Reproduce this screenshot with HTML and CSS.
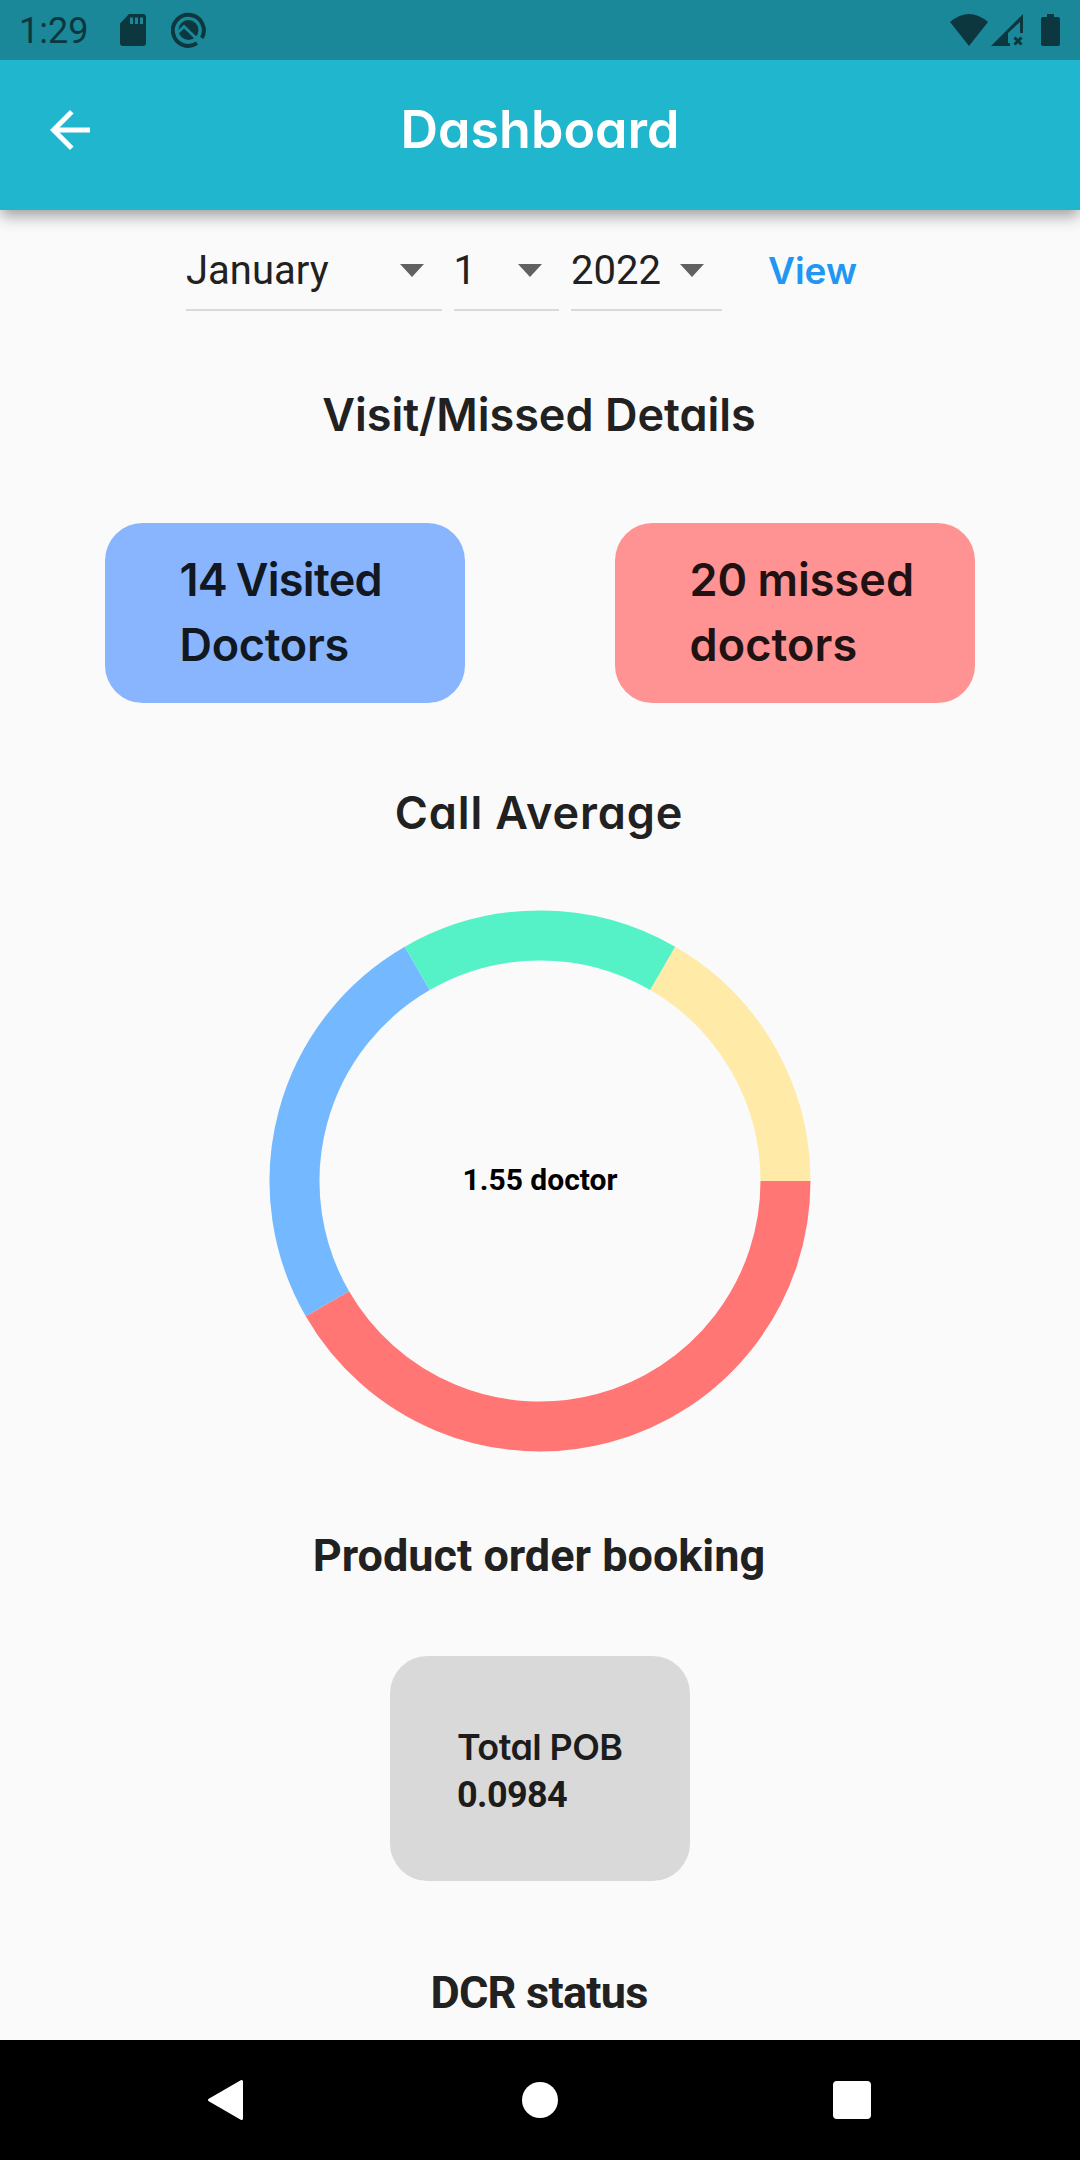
FILE: index.html
```
<!DOCTYPE html>
<html lang="en">
<head>
<meta charset="utf-8">
<title>Dashboard</title>
<link rel="stylesheet" href="styles.css">
</head>
<body>
<div class="status-bar">
  <span class="clock">1:29</span>
  <svg class="icon-sd" width="26" height="32" viewBox="0 0 26 32"><path fill-rule="evenodd" d="M9 0H23Q26 0 26 3V29Q26 32 23 32H3Q0 32 0 29V9.500ZM10 3.500V10H13V3.500ZM15 3.500V10H18V3.500ZM20 3.500V10H23V3.500Z"/></svg>
  <svg class="icon-q" width="36" height="36" viewBox="0 0 36 36"><path class="ring" d="M26 31.200A15.500 15.500 0 1 1 30.800 26"/><circle cx="17.500" cy="18" r="10"/><path class="cut" d="M7.500 20L13 14.500L29 30"/></svg>
  <div class="status-right">
    <svg class="icon-wifi" width="38" height="32" viewBox="0 0 38 32"><path d="M0 8Q19-8 38 8L19 32Z"/></svg>
    <svg class="icon-signal" width="32" height="32" viewBox="0 0 32 32"><path d="M32 0V19H29V8L17 19V29H19V32H0Z"/><path class="cross" d="M23.500 23.500L30.500 30.500M30.500 23.500L23.500 30.500"/></svg>
    <svg class="icon-battery" width="19" height="32" viewBox="0 0 19 32"><path d="M6 0H13V3H17Q19 3 19 5V30Q19 32 17 32H2Q0 32 0 30V5Q0 3 2 3H6Z"/></svg>
  </div>
</div>
<header class="app-bar">
  <svg class="back" width="60" height="60" viewBox="0 0 24 24"><path d="M20 11H7.830l5.590-5.590L12 4l-8 8 8 8 1.410-1.410L7.830 13H20v-2z"/></svg>
  <h1 class="title">Dashboard</h1>
</header>
<main class="content">
  <div class="filters">
    <div class="select month"><span>January</span><i class="caret"></i></div>
    <div class="select day"><span>1</span><i class="caret"></i></div>
    <div class="select year"><span>2022</span><i class="caret"></i></div>
    <a class="view">View</a>
  </div>
  <h2 class="heading visits">Visit/Missed Details</h2>
  <div class="cards">
    <div class="card visited"><span class="line-a">14 Visited</span><span class="line-d">Doctors</span></div>
    <div class="card missed"><span class="line-b">20 missed</span><span class="line-c">doctors</span></div>
  </div>
  <h2 class="heading average">Call Average</h2>
  <div class="donut">
    <svg width="542" height="542" viewBox="-271 -271 542 542">
      <path stroke="#ff7675" d="M245.500 0A245.500 245.500 0 0 1 -212.610 122.750"/>
      <path stroke="#74b9ff" d="M-212.610 122.750A245.500 245.500 0 0 1 -122.750 -212.610"/>
      <path stroke="#55f2c7" d="M-122.750 -212.610A245.500 245.500 0 0 1 122.750 -212.610"/>
      <path stroke="#ffeaa7" d="M122.750 -212.610A245.500 245.500 0 0 1 245.500 0"/>
    </svg>
    <span class="donut-label">1.55 doctor</span>
  </div>
  <h2 class="heading plain product">Product order booking</h2>
  <div class="pob"><span class="pob-name">Total POB</span><span class="pob-value">0.0984</span></div>
  <h2 class="heading plain dcr">DCR status</h2>
</main>
<nav class="nav-bar">
  <svg width="36" height="42" viewBox="0 0 36 42"><path d="M34.500 2.500V39.500L2.500 21Z" stroke="#fff" stroke-width="3" stroke-linejoin="round"/></svg>
  <svg width="40" height="36" viewBox="0 0 40 36"><circle cx="22" cy="18" r="18"/></svg>
  <svg width="38" height="38" viewBox="0 0 38 38"><rect width="38" height="38" rx="4"/></svg>
</nav>
</body>
</html>
```
FILE: styles.css
```
* { box-sizing: border-box; }
body {
  margin: 0;
  width: 1080px;
  height: 2160px;
  display: flex;
  flex-direction: column;
  overflow: hidden;
  background: #fafafa;
  color: #212121;
  font-family: Roboto, sans-serif;
}
svg { display: block; flex: none; }

.status-bar {
  flex: none;
  height: 60px;
  display: flex;
  align-items: center;
  padding: 0 20px 0 19px;
  background: #1a8899;
  color: #0c373e;
  fill: #0c373e;
}
.clock { width: 101px; font-size: 36px; line-height: 60px; padding-top: 2px; }
.icon-q { margin-left: 25px; }
.ring { fill: none; stroke: #0c373e; stroke-width: 4; }
.cut { fill: none; stroke: #1a8899; stroke-width: 3; }
.status-right { margin-left: auto; display: flex; }
.icon-signal { margin-left: 3px; }
.icon-battery { margin-left: 18px; }
.cross { stroke: #0c373e; stroke-width: 3; }

.app-bar {
  flex: none;
  position: relative;
  z-index: 1;
  height: 150px;
  display: grid;
  grid-template-columns: 60px 1fr 60px;
  align-items: center;
  padding: 0 40px 10px;
  background: #20b7ce;
  color: #fff;
  fill: #fff;
  box-shadow: 0 6px 12px -3px rgba(0,0,0,.2), 0 9px 14px rgba(0,0,0,.14), 0 3px 20px rgba(0,0,0,.1);
  clip-path: inset(0 0 -26px 0);
}
.title, .view, .visits, .average, .card, .pob-name {
  font-family: Inter, sans-serif;
  font-feature-settings: "cv11";
}
.title {
  margin: 0;
  text-align: center;
  font-size: 52px;
  font-weight: 600;
  line-height: 60px;
}

.content {
  flex: none;
  height: 1830px;
  padding-top: 22px;
  display: flex;
  flex-direction: column;
  align-items: center;
  overflow: hidden;
}
.filters {
  align-self: flex-start;
  display: flex;
  gap: 12px;
  height: 79px;
  margin-left: 186px;
}
.select {
  display: flex;
  justify-content: space-between;
  align-items: center;
  border-bottom: 2px solid #d9d9d9;
  font-size: 40px;
}
.month { width: 255.500px; padding-right: 18px; }
.day { width: 105.500px; padding-right: 17.500px; }
.year { width: 151px; padding-right: 18px; }
.caret {
  border: 12.500px solid transparent;
  border-top: 13px solid #616161;
  border-bottom-width: 0;
}
.view {
  margin-left: 34px;
  color: #2196f3;
  font-size: 37px;
  font-weight: 600;
  line-height: 78px;
}
.heading {
  margin: 0;
  height: 60px;
  flex: none;
  padding-right: 2px;
  font-size: 45px;
  font-weight: 600;
  line-height: 60px;
  white-space: nowrap;
}
.plain { font-weight: 700; }
.visits { margin-top: 73px; line-height: 62px; }
.average { margin-top: 79.500px; line-height: 62px; letter-spacing: .9px; }
.product { margin-top: 74px; }
.dcr { margin-top: 82.500px; letter-spacing: -.75px; }

.cards { display: flex; gap: 150px; margin-top: 78.500px; }
.card {
  width: 360px;
  height: 180px;
  padding-top: 24.500px;
  display: flex;
  flex-direction: column;
  border-radius: 37.500px;
  font-size: 45px;
  font-weight: 570;
  line-height: 65px;
}
.visited { background: #89b5ff; color: #111820; padding-left: 74.500px; }
.missed { background: #ff9393; color: #201212; padding-left: 74.500px; }
.line-a { letter-spacing: -.7px; word-spacing: -2px; }
.line-b { letter-spacing: 0; word-spacing: -1px; }
.line-c { letter-spacing: .1px; }
.line-d { letter-spacing: -.3px; }

.donut { display: grid; place-items: center; margin-top: 67.500px; flex: none; }
.donut > * { grid-area: 1 / 1; }
.donut path { fill: none; stroke-width: 50; }
.donut-label { color: #000; font-size: 30px; font-weight: 700; line-height: 36px; padding-bottom: 1px; }

.pob {
  flex: none;
  width: 300px;
  height: 225px;
  margin-top: 70px;
  padding: 68.500px 0 0 67px;
  display: flex;
  flex-direction: column;
  border-radius: 37.500px;
  background: #d9d9d9;
  color: #1c1c1c;
  font-size: 36px;
  line-height: 47px;
}
.pob-name { font-weight: 590; letter-spacing: -.6px; }
.pob-value { font-weight: 700; letter-spacing: -.6px; line-height: 49px; }

.nav-bar {
  flex: none;
  height: 120px;
  display: flex;
  align-items: center;
  justify-content: space-between;
  padding: 0 209px 0 207px;
  background: #000;
  fill: #fff;
}
```
